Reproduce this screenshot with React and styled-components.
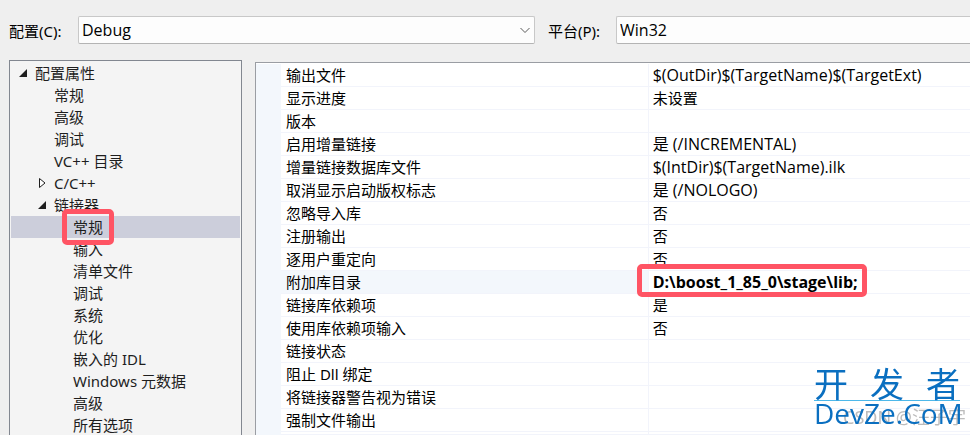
import React, { useState } from 'react'
import styled, { createGlobalStyle } from 'styled-components'

const GlobalStyle = createGlobalStyle`
  * {
    box-sizing: border-box;
  }

  body {
    margin: 0;
    overflow: hidden;
    background: #efefef;
    color: #000;
    font-family: "Noto Sans", "Noto Sans CJK SC", sans-serif;
    font-size: 15px;
  }
`

const Page = styled.main`
  height: 100vh;
  display: flex;
  flex-direction: column;
  padding: 16px 0 0 9px;
  overflow: hidden;
`

const Toolbar = styled.div`
  display: flex;
  align-items: center;
  height: 28px;
  flex: none;
`

const FieldLabel = styled.label`
  flex: none;
  width: ${({$width}) => $width}px;
`

const SelectWrapper = styled.div`
  position: relative;
  flex: ${({$grow}) => $grow} 1 0;
  margin-right: ${({$last}) => ($last ? 0 : 13)}px;

  & > svg {
    position: absolute;
    right: 5px;
    top: 11px;
    pointer-events: none;
  }
`

const Select = styled.select`
  appearance: none;
  display: block;
  width: 100%;
  height: 28px;
  padding: 0 3px;
  border: 1px solid #c8c8c8;
  border-bottom-color: #b4b4b4;
  border-right-width: ${({$last}) => ($last ? 0 : 1)}px;
  border-radius: ${({$last}) => ($last ? '2px 0 0 2px' : '2px')};
  background: #fdfdfd;
  color: #000;
  font-family: "Open Sans", "Noto Sans CJK SC", sans-serif;
  font-size: 16px;
`

const Content = styled.div`
  flex: 1;
  min-height: 0;
  display: flex;
  align-items: stretch;
  gap: 13px;
  padding-top: 16px;
`

const TreePanel = styled.nav`
  flex: none;
  width: 233px;
  padding: 1px;
  border: 1px solid #828790;
  border-bottom: 0;
  background: #f4f4f4;
`

const TreeList = styled.ul`
  margin: 0;
  padding: 0;
  list-style: none;
`

const TreeItem = styled.button`
  display: flex;
  align-items: center;
  width: 100%;
  height: 22px;
  padding: 0 0 0 ${({$level}) => 5 + $level * 19}px;
  border: 0;
  background: ${({$selected}) => ($selected ? '#cccedb' : 'transparent')};
  color: #1e1e1e;
  font: inherit;
  line-height: 22px;
  text-align: left;
  white-space: nowrap;
`

const Arrow = styled.svg`
  flex: none;
  width: 12px;
  height: 12px;
  margin-right: 7px;
`

const Mark = styled.span`
  position: relative;

  &::after {
    content: '';
    position: absolute;
    inset: ${({$inset}) => $inset};
    border: 5px solid #ff5464;
    border-radius: 5px;
    pointer-events: none;
  }
`

const GridPanel = styled.div`
  flex: 1;
  min-width: 0;
  margin-top: 2px;
  padding-top: 1px;
  border: solid #9a9da3;
  border-width: 1px 0 0 1px;
  background: #fff;
  overflow: hidden;
`

const PropertyTable = styled.table`
  width: 100%;
  height: 100%;
  table-layout: fixed;
  border-collapse: separate;
  border-spacing: 0;
`

const GutterCol = styled.col`
  width: 25px;
`

const ValueCol = styled.col`
  width: 45%;
`

const PropertyRow = styled.tr`
  height: 23px;
  background: ${({$active}) => ($active ? '#f3f7fc' : 'transparent')};
`

const Gutter = styled.td`
  padding: 0;
  background: #f3f7fc;
`

const NameCell = styled.th`
  padding: 0 0 0 5px;
  border-right: 1px solid #f2f4fb;
  border-bottom: 1px solid #f2f4fb;
  font-weight: 400;
  line-height: 22px;
  text-align: left;
  white-space: nowrap;
`

const ValueCell = styled.td`
  padding: 0 0 0 4px;
  border-bottom: 1px solid #f2f4fb;
  background: #fff;
  font-family: "Open Sans", "Noto Sans CJK SC", sans-serif;
  font-size: ${({$latin}) => ($latin ? 16 : 15)}px;
  font-weight: ${({$bold}) => ($bold ? 700 : 400)};
  line-height: 22px;
  white-space: nowrap;
`

const Watermark = styled.div`
  position: fixed;
  right: 10px;
  bottom: 8px;
  width: 146px;
  color: #0a6fc0;
  pointer-events: none;
`

const WatermarkTitle = styled.div`
  display: flex;
  justify-content: space-between;
  height: 32px;
  border-bottom: 1px solid #4db8ea;
  font-size: 34px;
  line-height: 30px;
`

const WatermarkName = styled.div`
  height: 26px;
  font-family: "Open Sans", sans-serif;
  font-size: 28px;
  line-height: 24px;
  white-space: nowrap;
`

const Credit = styled.div`
  position: fixed;
  right: 4px;
  bottom: 8px;
  color: #bcbcbc;
  font-size: 18px;
  line-height: 20px;
  pointer-events: none;
`

const tree = [
  {id: 'root', label: '配置属性', level: 0, arrow: 'open'},
  {id: 'general', label: '常规', level: 1},
  {id: 'advanced', label: '高级', level: 1},
  {id: 'debug', label: '调试', level: 1},
  {id: 'dirs', label: 'VC++ 目录', level: 1},
  {id: 'cpp', label: 'C/C++', level: 1, arrow: 'closed'},
  {id: 'linker', label: '链接器', level: 1, arrow: 'open'},
  {id: 'linker-general', label: '常规', level: 2, marked: true},
  {id: 'linker-input', label: '输入', level: 2},
  {id: 'linker-manifest', label: '清单文件', level: 2},
  {id: 'linker-debug', label: '调试', level: 2},
  {id: 'linker-system', label: '系统', level: 2},
  {id: 'linker-optimize', label: '优化', level: 2},
  {id: 'linker-idl', label: '嵌入的 IDL', level: 2},
  {id: 'linker-winmd', label: 'Windows 元数据', level: 2},
  {id: 'linker-advanced', label: '高级', level: 2},
  {id: 'linker-all', label: '所有选项', level: 2},
]

const properties = [
  {name: '输出文件', value: '$(OutDir)$(TargetName)$(TargetExt)'},
  {name: '显示进度', value: '未设置'},
  {name: '版本', value: ''},
  {name: '启用增量链接', value: '是 (/INCREMENTAL)'},
  {name: '增量链接数据库文件', value: '$(IntDir)$(TargetName).ilk'},
  {name: '取消显示启动版权标志', value: '是 (/NOLOGO)'},
  {name: '忽略导入库', value: '否'},
  {name: '注册输出', value: '否'},
  {name: '逐用户重定向', value: '否'},
  {name: '附加库目录', value: 'D:\\boost_1_85_0\\stage\\lib;', edited: true},
  {name: '链接库依赖项', value: '是'},
  {name: '使用库依赖项输入', value: '否'},
  {name: '链接状态', value: ''},
  {name: '阻止 Dll 绑定', value: ''},
  {name: '将链接器警告视为错误', value: ''},
  {name: '强制文件输出', value: ''},
]

const hasLatin = (text) => /[A-Za-z]/.test(text)

const TreeArrow = ({type}) => (
  <Arrow viewBox="0 0 12 12" aria-hidden="true">
    {type === 'open' && <path d="M11 2v8H3z" fill="#1e1e1e" />}
    {type === 'closed' && <path d="M4.500 1.500v9l5.500-4.500z" fill="#fff" stroke="#1e1e1e" />}
  </Arrow>
)

const SelectField = ({id, label, labelWidth, options, grow, last}) => (
  <>
    <FieldLabel htmlFor={id} $width={labelWidth}>{label}</FieldLabel>
    <SelectWrapper $grow={grow} $last={last}>
      <Select id={id} $last={last}>
        {options.map((option) => <option key={option}>{option}</option>)}
      </Select>
      {!last && (
        <svg width="10" height="7" viewBox="0 0 10 7" aria-hidden="true">
          <path d="M.5 1 5 5.500 9.500 1" fill="none" stroke="#5a5a5a" />
        </svg>
      )}
    </SelectWrapper>
  </>
)

const App = () => {

  const [selected, setSelected] = useState('linker-general')

  return (
    <Page>
      <GlobalStyle />
      <Toolbar>
        <SelectField id="config" label="配置(C):" labelWidth={69} options={['Debug', 'Release']} grow={457} />
        <SelectField id="platform" label="平台(P):" labelWidth={68} options={['Win32', 'x64']} grow={354} last />
      </Toolbar>
      <Content>
        <TreePanel>
          <TreeList>
            {tree.map((item) => (
              <li key={item.id}>
                <TreeItem
                  type="button"
                  $level={item.level}
                  $selected={item.id === selected}
                  onClick={() => setSelected(item.id)}
                >
                  <TreeArrow type={item.arrow} />
                  {item.marked ? <Mark $inset="-7px -11px">{item.label}</Mark> : item.label}
                </TreeItem>
              </li>
            ))}
          </TreeList>
        </TreePanel>
        <GridPanel>
          <PropertyTable>
            <colgroup>
              <GutterCol />
              <col />
              <ValueCol />
            </colgroup>
            <tbody>
              {properties.map(({name, value, edited}) => (
                <PropertyRow key={name} $active={edited}>
                  <Gutter />
                  <NameCell scope="row">{name}</NameCell>
                  <ValueCell $bold={edited} $latin={hasLatin(value)}>
                    {edited ? <Mark $inset="-7px -9px -4px -16px">{value}</Mark> : value}
                  </ValueCell>
                </PropertyRow>
              ))}
              <tr>
                <Gutter />
                <NameCell as="td" />
                <ValueCell />
              </tr>
            </tbody>
          </PropertyTable>
        </GridPanel>
      </Content>
      <Credit>CSDN @汪子宇</Credit>
      <Watermark>
        <WatermarkTitle>
          <span>开</span>
          <span>发</span>
          <span>者</span>
        </WatermarkTitle>
        <WatermarkName>DevZe.CoM</WatermarkName>
      </Watermark>
    </Page>
  )
}

export default App
